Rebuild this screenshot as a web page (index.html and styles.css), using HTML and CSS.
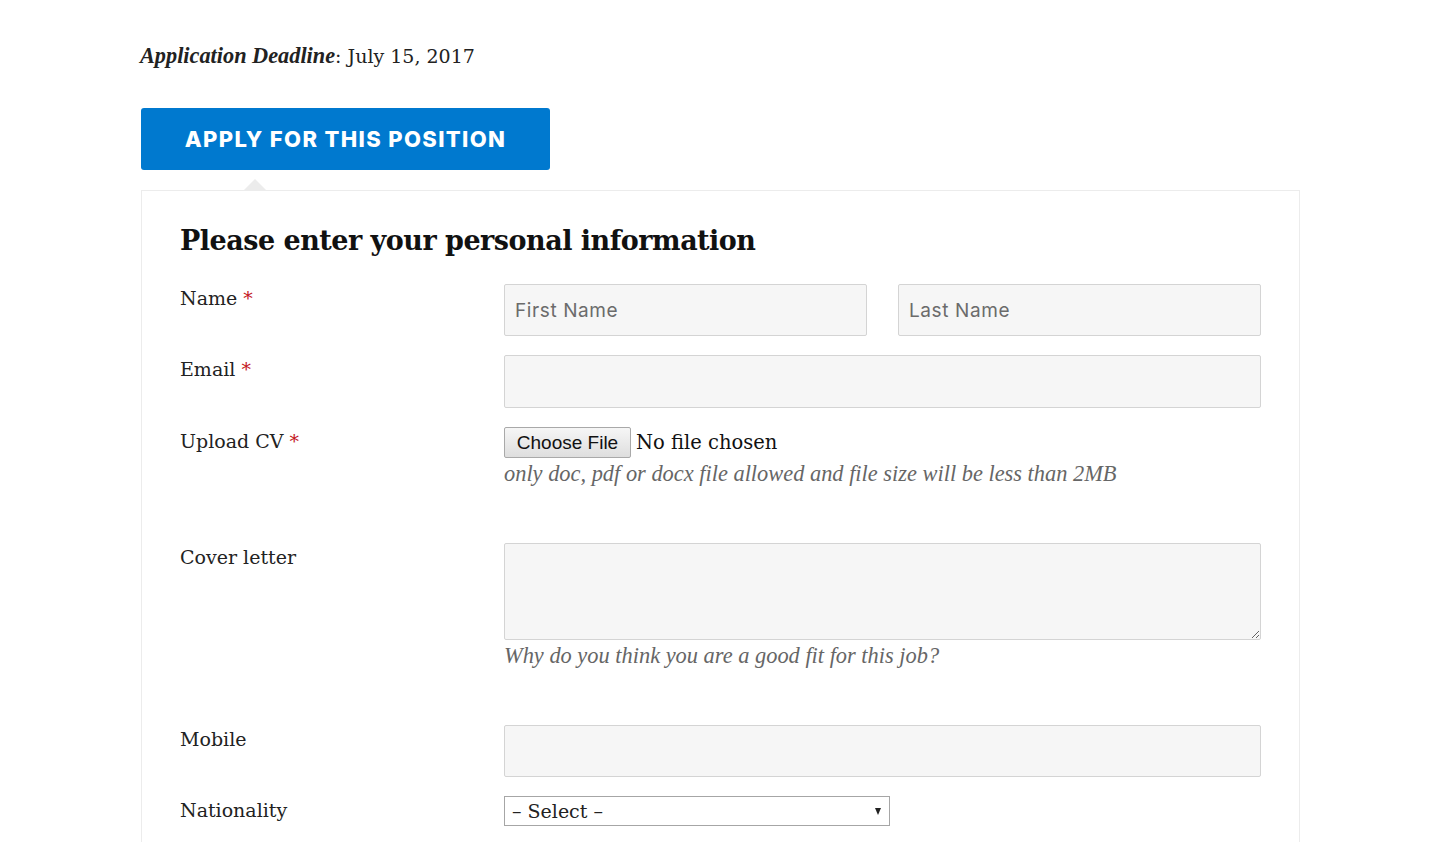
FILE: index.html
```html
<!DOCTYPE html>
<html lang="en">
<head>
<meta charset="utf-8">
<title>Apply</title>
<link rel="stylesheet" href="styles.css">
</head>
<body>
<div class="page">
  <p class="deadline"><em>Application Deadline</em>: July 15, 2017</p>
  <button class="apply-btn" type="button">APPLY FOR THIS POSITION</button>
  <form class="apply-box">
    <h2 class="box-title">Please enter your personal information</h2>

    <div class="row">
      <div class="label">Name <span class="req">*</span></div>
      <div class="field field-split">
        <input class="text-input" type="text" placeholder="First Name">
        <input class="text-input" type="text" placeholder="Last Name">
      </div>
    </div>

    <div class="row">
      <div class="label">Email <span class="req">*</span></div>
      <div class="field">
        <input class="text-input text-input-tall" type="email">
      </div>
    </div>

    <div class="row row-upload">
      <div class="label">Upload CV <span class="req">*</span></div>
      <div class="field">
        <div class="file-line">
          <span class="file-btn">Choose File</span>
          <span class="file-status">No file chosen</span>
        </div>
        <p class="hint">only doc, pdf or docx file allowed and file size will be less than 2MB</p>
      </div>
    </div>

    <div class="row row-cover">
      <div class="label">Cover letter</div>
      <div class="field">
        <textarea class="text-area"></textarea>
        <p class="hint">Why do you think you are a good fit for this job?</p>
      </div>
    </div>

    <div class="row">
      <div class="label">Mobile</div>
      <div class="field">
        <input class="text-input" type="tel">
      </div>
    </div>

    <div class="row">
      <div class="label">Nationality</div>
      <div class="field">
        <div class="select-wrap">
          <select class="select">
            <option>&ndash; Select &ndash;</option>
          </select>
        </div>
      </div>
    </div>
  </form>
</div>
</body>
</html>
```

FILE: styles.css
```css
* { box-sizing: border-box; }

html, body {
  margin: 0;
  padding: 0;
  background: #fff;
}

body {
  font-family: "DejaVu Serif", "Liberation Serif", serif;
  color: #222;
  overflow: hidden;
}

.page {
  padding: 41px 0 0 140px;
  width: 1300px;
}

.deadline {
  margin: 0;
  font-size: 19px;
  line-height: 30px;
}

.deadline em {
  font-family: "Liberation Serif", serif;
  font-weight: 700;
  font-size: 22.3px;
}

.apply-btn {
  display: block;
  margin: 37px 0 0 1px;
  width: 409px;
  height: 62px;
  border: 0;
  border-radius: 3px;
  background: #0079cf;
  color: #fff;
  font-family: Inter, "Liberation Sans", sans-serif;
  font-weight: 800;
  font-size: 22px;
  letter-spacing: 1.35px;
  padding: 0;
}

.apply-box {
  position: relative;
  margin: 20px 0 0 1px;
  border: 1px solid #ececec;
  border-bottom: 0;
  padding: 30px 38px 40px 38px;
  width: 1159px;
  min-height: 700px;
}

.apply-box::before {
  content: "";
  position: absolute;
  top: -12px;
  left: 101px;
  border-left: 12px solid transparent;
  border-right: 12px solid transparent;
  border-bottom: 12px solid #ececec;
}

.box-title {
  margin: 0 0 23px 0;
  font-family: "DejaVu Serif", serif;
  font-weight: 700;
  font-size: 27px;
  line-height: 40px;
  color: #111;
  letter-spacing: -0.5px;
}

.row {
  display: flex;
  margin-bottom: 19px;
}

.label {
  width: 324px;
  flex: none;
  font-size: 19px;
  line-height: 30px;
  margin-top: -1px;
}

.req {
  color: #c4161c;
}

.field {
  width: 757px;
  flex: none;
}

.field-split {
  display: flex;
  gap: 31px;
}

.text-input {
  display: block;
  width: 100%;
  height: 52px;
  margin: 0;
  border: 1px solid #d4d4d4;
  border-radius: 2px;
  background: #f6f6f6;
  padding: 0 10px;
  font-family: Inter, "Liberation Sans", sans-serif;
  font-size: 19px;
  letter-spacing: 0.6px;
  color: #333;
}

.text-input-tall {
  height: 53px;
}

.text-input::placeholder {
  color: #6b6b6b;
}

.row-upload {
  height: 97px;
}

.file-line {
  display: flex;
  align-items: center;
  height: 31px;
}

.file-btn {
  display: inline-flex;
  align-items: center;
  justify-content: center;
  width: 127px;
  height: 31px;
  border: 1px solid #a9a9a9;
  border-radius: 2px;
  background: linear-gradient(#f6f6f6, #dedede);
  font-family: "Liberation Sans", Arial, sans-serif;
  font-size: 19px;
  color: #111;
}

.file-status {
  margin-left: 5px;
  font-size: 19.5px;
  color: #111;
}

.hint {
  margin: 0;
  font-family: "Liberation Serif", serif;
  font-style: italic;
  font-size: 22.4px;
  line-height: 32px;
  color: #666;
}

.row-cover {
  height: 163px;
}

.text-area {
  display: block;
  width: 100%;
  height: 97px;
  margin: 0;
  border: 1px solid #d4d4d4;
  border-radius: 2px;
  background: #f6f6f6;
  font-family: inherit;
  font-size: 16px;
}

.select-wrap {
  position: relative;
  width: 386px;
}

.select-wrap::after {
  content: "";
  position: absolute;
  right: 9px;
  top: 12px;
  border-left: 3.5px solid transparent;
  border-right: 3.5px solid transparent;
  border-top: 7px solid #222;
  pointer-events: none;
}

.select {
  display: block;
  width: 100%;
  height: 30px;
  margin: 0;
  appearance: none;
  -webkit-appearance: none;
  border: 1px solid #a6a6a6;
  border-radius: 0;
  background: #fff;
  padding: 0 0 0 7px;
  font-family: "DejaVu Serif", serif;
  font-size: 19px;
  color: #222;
}
```
